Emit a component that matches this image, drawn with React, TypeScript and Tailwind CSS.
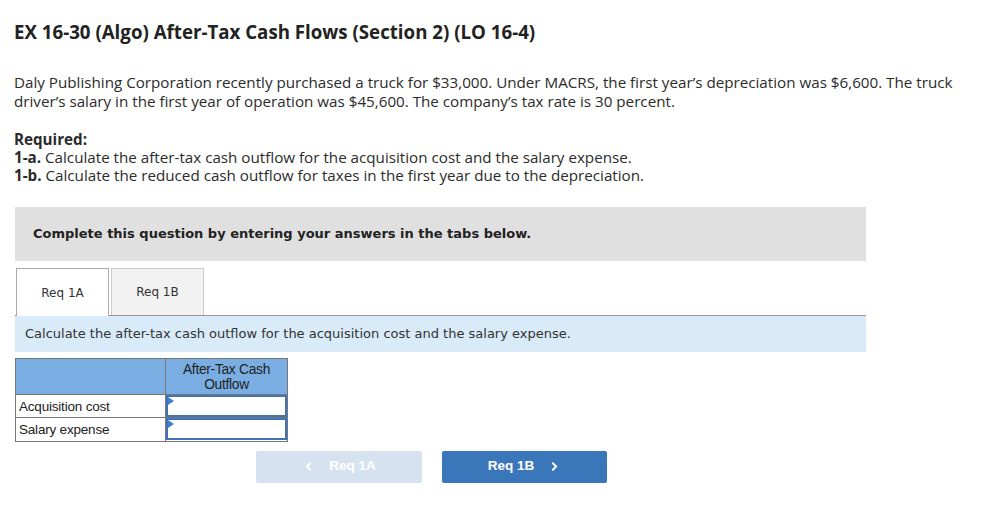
import { ChevronLeft, ChevronRight } from 'lucide-react'

const rows = ['Acquisition cost', 'Salary expense']

export default function App() {
    return (
        <div className="min-h-screen bg-white text-[#2b2b2b]">
            <div className="pl-[14px] pt-[20px] w-[960px]">
                <h1 className="text-[18.7px] font-bold leading-[24px] text-[#222] font-['Open_Sans',sans-serif]">
                    EX 16-30 (Algo) After-Tax Cash Flows (Section 2) (LO 16-4)
                </h1>

                <p className="mt-[29px] text-[15.2px] leading-[19px] font-['Open_Sans',sans-serif]">
                    Daly Publishing Corporation recently purchased a truck for $33,000. Under MACRS, the first year’s depreciation was $6,600. The truck driver’s salary in the first year of operation was $45,600. The company’s tax rate is 30 percent.
                </p>

                <div className="mt-[19px] text-[15.2px] leading-[18px] font-['Open_Sans',sans-serif]">
                    <p className="font-bold">Required:</p>
                    <p><span className="font-bold">1-a.</span> Calculate the after-tax cash outflow for the acquisition cost and the salary expense.</p>
                    <p><span className="font-bold">1-b.</span> Calculate the reduced cash outflow for taxes in the first year due to the depreciation.</p>
                </div>

                <div className="ml-[1px] mt-[23px] w-[851px] font-['DejaVu_Sans',sans-serif]">
                    <div className="h-[54px] bg-[#e0e0e0] pl-[18px] flex items-center text-[13px] font-bold text-[#222]">
                        Complete this question by entering your answers in the tabs below.
                    </div>

                    <div className="mt-[7px] flex items-end pl-[1px] border-b border-[#999] h-[48px]">
                        <div className="w-[93px] h-[48px] -mb-px bg-white border border-b-0 border-[#aaa] flex items-center justify-center text-[12px] text-[#333]">
                            Req 1A
                        </div>
                        <div className="ml-[2px] w-[93px] h-[47px] bg-[#f2f2f2] border border-b-0 border-[#ccc] flex items-center justify-center text-[12px] text-[#333]">
                            Req 1B
                        </div>
                    </div>

                    <div className="h-[36px] bg-[#d9ebf9] pl-[10px] flex items-center text-[13px] text-[#333]">
                        Calculate the after-tax cash outflow for the acquisition cost and the salary expense.
                    </div>
                </div>

                <table className="mt-[6px] ml-[1px] border-collapse font-['Liberation_Sans',sans-serif] text-[13.5px] text-[#222]">
                    <thead>
                        <tr className="h-[36px] bg-[#7aaee3]">
                            <th className="w-[150px] border border-[#777]"></th>
                            <th className="w-[122px] border border-[#777] font-normal text-[13.8px] tracking-[-0.3px] leading-[15px] align-top pt-[3px]">
                                After-Tax Cash<br />Outflow
                            </th>
                        </tr>
                    </thead>
                    <tbody>
                        {rows.map((r) => (
                            <tr key={r} className="h-[23px]">
                                <td className="border border-[#777] pl-[3px] pt-[2px] tracking-[-0.2px]">{r}</td>
                                <td className="border border-[#777] p-0">
                                    <div className="relative h-[22px] border-2 border-[#3f73b6] bg-white">
                                        <span className="absolute left-0 top-0 w-0 h-0 border-t-[4px] border-b-[4px] border-l-[6px] border-t-transparent border-b-transparent border-l-[#3f7fd0]"></span>
                                    </div>
                                </td>
                            </tr>
                        ))}
                    </tbody>
                </table>

                <div className="mt-[9px] ml-[242px] flex gap-[20px] font-['Liberation_Sans',sans-serif] text-[13.5px] font-bold text-white">
                    <button className="w-[166px] h-[32px] rounded-[2px] bg-[#d6e2f0] flex items-center justify-center gap-[14px]">
                        <ChevronLeft size={13} strokeWidth={3.5} />
                        <span>Req 1A</span>
                    </button>
                    <button className="w-[165px] h-[32px] rounded-[2px] bg-[#3a76ba] flex items-center justify-center gap-[14px]">
                        <span>Req 1B</span>
                        <ChevronRight size={13} strokeWidth={3.5} />
                    </button>
                </div>
            </div>
        </div>
    )
}
